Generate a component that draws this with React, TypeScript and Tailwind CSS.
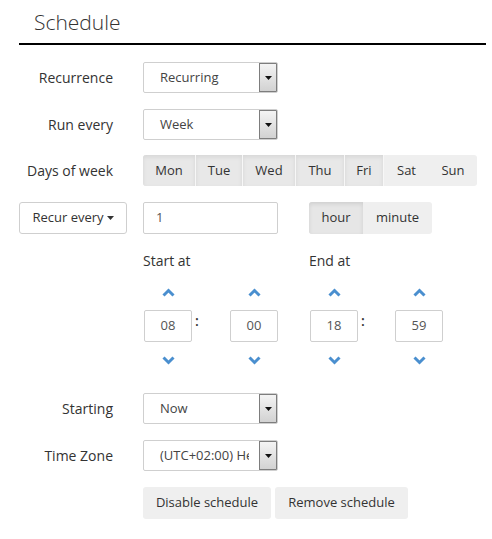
import React from "react";

const font = { fontFamily: '"Open Sans", "Liberation Sans", sans-serif' };

function SelectBox({ value }: { value: string }) {
  return (
    <div className="flex h-[31px] w-[135px] items-stretch overflow-hidden rounded-[2px] border border-[#cfcfcf] bg-white">
      <div className="mr-[10px] flex flex-1 items-center overflow-hidden whitespace-nowrap pl-[16px] text-[13px] text-[#444]">
        {value}
      </div>
      <div className="flex w-[18px] items-center justify-center border border-[#7d7d7d] bg-gradient-to-b from-[#f4f4f4] to-[#d2d2d2]">
        <svg width="7" height="4" viewBox="0 0 7 4">
          <polygon points="0,0 7,0 3.5,4" fill="#111" />
        </svg>
      </div>
    </div>
  );
}

function Row({ label, children }: { label: string; children: React.ReactNode }) {
  return (
    <div className="flex items-center">
      <div className="mr-[30px] w-[94px] text-right text-[14px] text-[#333]">{label}</div>
      {children}
    </div>
  );
}

function Chevron({ up }: { up?: boolean }) {
  return (
    <svg width="13" height="9" viewBox="0 0 13 9">
      <polyline
        points={up ? "1.5,7.5 6.5,2.5 11.5,7.5" : "1.5,1.5 6.5,6.5 11.5,1.5"}
        fill="none"
        stroke="#4a8fcf"
        strokeWidth="3"
      />
    </svg>
  );
}

function TimeCol({ value }: { value: string }) {
  return (
    <div className="flex w-[48px] flex-col items-center">
      <div className="flex h-[20px] items-center">
        <Chevron up />
      </div>
      <div className="mt-[8px] flex h-[32px] w-[48px] items-center justify-center rounded-[2px] border border-[#cfcfcf] text-[13px] text-[#555]">
        {value}
      </div>
      <div className="mt-[8px] flex h-[20px] items-center">
        <Chevron />
      </div>
    </div>
  );
}

function TimeGroup({ h, m, w }: { h: string; m: string; w: number }) {
  return (
    <div className="flex items-start" style={{ width: w }}>
      <TimeCol value={h} />
      <div className="ml-[3px] mt-[28px] text-[14px] font-semibold text-[#333]">:</div>
      <div className="flex-1" />
      <TimeCol value={m} />
    </div>
  );
}

const days = [
  { d: "Mon", w: 53, on: true },
  { d: "Tue", w: 47, on: true },
  { d: "Wed", w: 53, on: true },
  { d: "Thu", w: 49, on: true },
  { d: "Fri", w: 39, on: true },
  { d: "Sat", w: 45, on: false },
  { d: "Sun", w: 48, on: false },
];

export default function App() {
  return (
    <div className="h-[539px] w-[492px] bg-white" style={font}>
      <div className="pl-[19px] pr-[6px]">
        {/* Header */}
        <div className="h-[45px] border-b-2 border-black pl-[15px] pt-[7px] text-[21px] font-light text-[#333]">
          Schedule
        </div>

        <div className="mt-[17px] flex flex-col">
          <Row label="Recurrence">
            <SelectBox value="Recurring" />
          </Row>
          <div className="mt-[16px]">
            <Row label="Run every">
              <SelectBox value="Week" />
            </Row>
          </div>

          {/* Days */}
          <div className="mt-[15px]">
            <Row label="Days of week">
              <div className="flex h-[31px] overflow-hidden rounded-[3px] bg-[#efefef]">
                {days.map((x) => (
                  <div
                    key={x.d}
                    style={{ width: x.w }}
                    className={
                      x.on
                        ? "flex items-center justify-center border-r border-[#f7f7f7] bg-[#e8e8e8] text-[13px] text-[#333] shadow-[inset_0_2px_4px_rgba(0,0,0,0.08)]"
                        : "flex items-center justify-center text-[13px] text-[#333]"
                    }
                  >
                    {x.d}
                  </div>
                ))}
              </div>
            </Row>
          </div>

          {/* Recur every */}
          <div className="mt-[16px] flex items-center">
            <div className="mr-[16px] flex h-[32px] w-[108px] items-center justify-center rounded-[3px] border border-[#cfcfcf] text-[13px] text-[#333]">
              Recur every
              <svg className="ml-[3px]" width="7" height="4" viewBox="0 0 7 4">
                <polygon points="0,0 7,0 3.5,4" fill="#333" />
              </svg>
            </div>
            <div className="flex h-[32px] w-[135px] items-center rounded-[2px] border border-[#cfcfcf] pl-[12px] text-[13px] text-[#555]">
              1
            </div>
            <div className="ml-[31px] flex h-[32px] overflow-hidden rounded-[3px] bg-[#efefef] text-[13px] text-[#333]">
              <div className="flex w-[54px] items-center justify-center bg-[#e6e6e6] shadow-[inset_0_2px_4px_rgba(0,0,0,0.1)]">
                hour
              </div>
              <div className="flex w-[69px] items-center justify-center">minute</div>
            </div>
          </div>

          {/* Start / End */}
          <div className="mt-[16px] flex pl-[124px] text-[14px] text-[#333]">
            <div className="w-[166px]">Start at</div>
            <div>End at</div>
          </div>
          <div className="mt-[11px] flex pl-[125px]">
            <TimeGroup h="08" m="00" w={134} />
            <div className="w-[32px]" />
            <TimeGroup h="18" m="59" w={133} />
          </div>

          <div className="mt-[23px]">
            <Row label="Starting">
              <SelectBox value="Now" />
            </Row>
          </div>
          <div className="mt-[16px]">
            <Row label="Time Zone">
              <SelectBox value="(UTC+02:00) Helsinki" />
            </Row>
          </div>

          <div className="mt-[16px] flex gap-[4px] pl-[124px] text-[13px] text-[#333]">
            <div className="flex h-[32px] w-[128px] items-center justify-center rounded-[3px] bg-[#efefef]">
              Disable schedule
            </div>
            <div className="flex h-[32px] w-[133px] items-center justify-center rounded-[3px] bg-[#efefef]">
              Remove schedule
            </div>
          </div>
        </div>
      </div>
    </div>
  );
}
